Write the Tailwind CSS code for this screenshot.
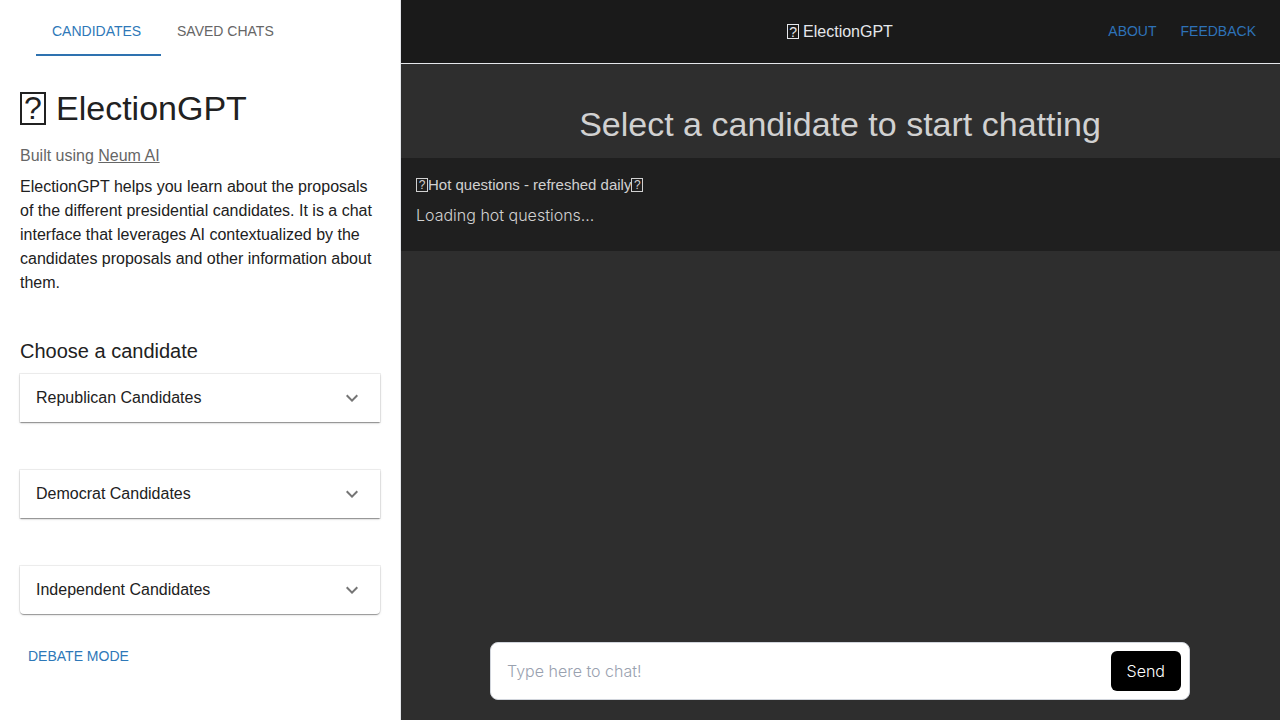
<!DOCTYPE html>
<html lang="en">
<head>
    <meta charset="UTF-8">
    <meta name="viewport" content="width=device-width, initial-scale=1.0">
    <title>ElectionGPT</title>
    <script src="https://cdn.jsdelivr.net/npm/@tailwindcss/browser@4"></script>
</head>
<body class="flex min-h-screen bg-[#2e2e2e] font-['Liberation_Sans',Arial,sans-serif] text-base text-[#212121]">
    <!-- Sidebar -->
    <aside class="relative z-10 w-[400px] shrink-0 bg-white px-5 shadow-[1px_0_0_#e5e7eb]">
        <div class="flex h-14 px-4 text-sm" role="tablist">
            <button class="w-[125px] border-b-2 border-[#2e72b0] px-4 pt-2 text-left text-[#2e78b8]" role="tab" aria-selected="true">CANDIDATES</button>
            <button class="border-b-2 border-transparent px-4 pt-2 text-[#666666]" role="tab" aria-selected="false">SAVED CHATS</button>
        </div>

        <h1 class="mt-8 flex items-center gap-2.5 text-[34px] leading-10">
            <span class="flex h-[33px] w-[26px] items-center justify-center border-2 border-current text-[32px]">?</span>
            ElectionGPT
        </h1>
        <p class="mt-4 leading-6 text-[#666666]">Built using <a href="#" class="underline">Neum AI</a></p>
        <p class="mt-[7px] leading-6">ElectionGPT helps you learn about the proposals of the different presidential candidates. It is a chat interface that leverages AI contextualized by the candidates proposals and other information about them.</p>

        <h2 class="mt-10 text-xl leading-8">Choose a candidate</h2>
        <div class="mt-[7px] flex flex-col gap-12">
            <button class="flex h-12 items-center justify-between bg-white px-4 text-left shadow-[0_2px_1px_-1px_rgba(0,0,0,0.2),0_1px_1px_0_rgba(0,0,0,0.14),0_1px_3px_0_rgba(0,0,0,0.12),0_0_0_1px_rgba(0,0,0,0.06)]" aria-expanded="false">
                Republican Candidates
                <svg class="size-6 fill-[#757575]" viewBox="0 0 24 24"><path d="M16.59 8.59 12 13.17 7.41 8.59 6 10l6 6 6-6z"/></svg>
            </button>
            <button class="flex h-12 items-center justify-between bg-white px-4 text-left shadow-[0_2px_1px_-1px_rgba(0,0,0,0.2),0_1px_1px_0_rgba(0,0,0,0.14),0_1px_3px_0_rgba(0,0,0,0.12),0_0_0_1px_rgba(0,0,0,0.06)]" aria-expanded="false">
                Democrat Candidates
                <svg class="size-6 fill-[#757575]" viewBox="0 0 24 24"><path d="M16.59 8.59 12 13.17 7.41 8.59 6 10l6 6 6-6z"/></svg>
            </button>
            <button class="flex h-12 items-center justify-between rounded-b bg-white px-4 text-left shadow-[0_2px_1px_-1px_rgba(0,0,0,0.2),0_1px_1px_0_rgba(0,0,0,0.14),0_1px_3px_0_rgba(0,0,0,0.12),0_0_0_1px_rgba(0,0,0,0.06)]" aria-expanded="false">
                Independent Candidates
                <svg class="size-6 fill-[#757575]" viewBox="0 0 24 24"><path d="M16.59 8.59 12 13.17 7.41 8.59 6 10l6 6 6-6z"/></svg>
            </button>
        </div>
        <button class="mt-6 px-2 py-2 text-sm text-[#2e78b8]">DEBATE MODE</button>
    </aside>

    <!-- Chat -->
    <main class="flex min-w-0 grow flex-col">
        <header class="grid h-16 grid-cols-3 items-center border-b border-gray-200 bg-[#1a1a1a] px-6">
            <p class="col-start-2 flex items-center justify-center gap-1 text-gray-200">
                <span class="flex h-[15px] w-3 items-center justify-center border border-current text-sm">?</span>
                ElectionGPT
            </p>
            <nav class="flex justify-end gap-6 pb-0.5 text-sm text-[#2e72b8]">
                <a href="#">ABOUT</a>
                <a href="#">FEEDBACK</a>
            </nav>
        </header>

        <h2 class="mt-10 text-center text-[34px] leading-10 text-[#d1d1d1]">Select a candidate to start chatting</h2>

        <section class="mt-3.5 bg-[#1f1f1f] px-4 pt-[15px] pb-6 text-[#d1d1d1]">
            <p class="flex items-center text-[15px] leading-6">
                <span class="flex h-3.5 w-3 items-center justify-center border border-current text-xs">?</span>
                Hot questions - refreshed daily
                <span class="flex h-3.5 w-3 items-center justify-center border border-current text-xs">?</span>
            </p>
            <p class="mt-1.5 font-[Inter,sans-serif] leading-6 font-light">Loading hot questions...</p>
        </section>

        <form class="mx-auto mt-auto mb-5 flex w-full max-w-[700px] items-center rounded-lg border border-gray-300 bg-white p-2 font-[Inter,sans-serif] font-light">
            <input type="text" placeholder="Type here to chat!" aria-label="Message" class="h-10 min-w-0 grow px-2 outline-none placeholder:text-gray-400">
            <button type="button" class="h-10 rounded-md bg-black px-4 text-white">Send</button>
        </form>
    </main>
</body>
</html>
